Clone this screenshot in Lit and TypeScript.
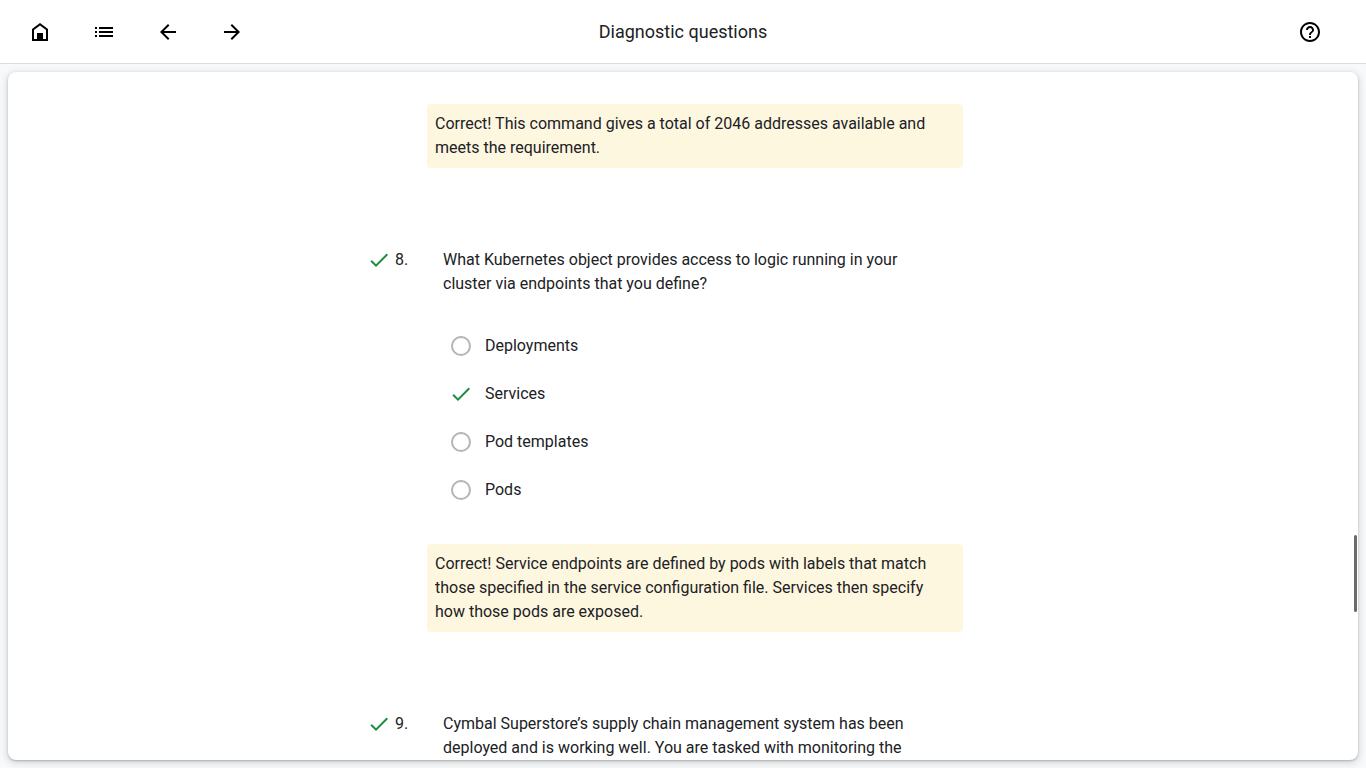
import { LitElement, html, css, svg, nothing } from "lit";
import { customElement, property } from "lit/decorators.js";

const ICONS = {
  home: svg`<path fill-rule="evenodd" d="M4 21V9l8-6 8 6v12zM6 19h3v-6h6v6h3v-9l-6-4.5L6 10z"/><path d="M9 13h6v7H9z"/>`,
  list: svg`<path d="M3 13h2v-2H3v2zm0 4h2v-2H3v2zm0-8h2V7H3v2zm4 4h14v-2H7v2zm0 4h14v-2H7v2zM7 7v2h14V7H7z"/>`,
  back: svg`<path d="M20 11H7.83l5.59-5.59L12 4l-8 8 8 8 1.41-1.41L7.83 13H20v-2z"/>`,
  forward: svg`<path d="M12 4l-1.41 1.41L16.17 11H4v2h12.17l-5.58 5.59L12 20l8-8z"/>`,
  help: svg`<path d="M11 18h2v-2h-2v2zm1-16C6.48 2 2 6.48 2 12s4.48 10 10 10 10-4.48 10-10S17.52 2 12 2zm0 18c-4.41 0-8-3.59-8-8s3.59-8 8-8 8 3.59 8 8-3.59 8-8 8zm0-14c-2.21 0-4 1.79-4 4h2c0-1.1.9-2 2-2s2 .9 2 2c0 2-3 1.75-3 5h2c0-2.25 3-2.5 3-5 0-2.21-1.79-4-4-4z"/>`,
  check: svg`<path d="M9 16.17L4.83 12l-1.42 1.41L9 19 21 7l-1.41-1.41z"/>`,
};

type IconName = keyof typeof ICONS;

const icon = (name: IconName) =>
  html`<svg class="icon" viewBox="0 0 24 24" aria-hidden="true">${ICONS[name]}</svg>`;

const iconStyles = css`
  .icon {
    display: block;
    width: 24px;
    height: 24px;
    fill: currentColor;
  }
`;

interface Question {
  number: number;
  text: string;
  options: string[];
  answer?: string;
  feedback?: string;
}

const PREVIOUS_FEEDBACK =
  "Correct! This command gives a total of 2046 addresses available and meets the requirement.";

const QUESTIONS: Question[] = [
  {
    number: 8,
    text: "What Kubernetes object provides access to logic running in your cluster via endpoints that you define?",
    options: ["Deployments", "Services", "Pod templates", "Pods"],
    answer: "Services",
    feedback:
      "Correct! Service endpoints are defined by pods with labels that match those specified in the service configuration file. Services then specify how those pods are exposed.",
  },
  {
    number: 9,
    text: "Cymbal Superstore’s supply chain management system has been deployed and is working well. You are tasked with monitoring the",
    options: [],
  },
];

@customElement("quiz-header")
class QuizHeader extends LitElement {
  static styles = [
    iconStyles,
    css`
      :host {
        display: block;
      }
      .bar {
        box-sizing: border-box;
        display: grid;
        grid-template-columns: 1fr auto 1fr;
        align-items: center;
        height: 64px;
        padding: 0 16px;
        background: #fff;
        border-bottom: 1px solid #dadce0;
      }
      .group {
        display: flex;
        gap: 16px;
      }
      .end {
        justify-content: flex-end;
        padding-right: 16px;
      }
      .button {
        display: grid;
        place-items: center;
        width: 48px;
        height: 48px;
        padding: 0;
        border: 0;
        border-radius: 50%;
        background: none;
        color: #000;
        cursor: pointer;
      }
      .title {
        margin: 0;
        font-size: 18px;
        font-weight: 400;
        line-height: 24px;
        color: #202124;
      }
    `,
  ];

  private button(name: IconName, label: string) {
    return html`<button class="button" type="button" aria-label=${label}>${icon(name)}</button>`;
  }

  render() {
    return html`
      <header class="bar">
        <nav class="group">
          ${this.button("home", "Home")} ${this.button("list", "Contents")}
          ${this.button("back", "Previous")} ${this.button("forward", "Next")}
        </nav>
        <h1 class="title">Diagnostic questions</h1>
        <div class="group end">${this.button("help", "Help")}</div>
      </header>
    `;
  }
}

@customElement("quiz-feedback")
class QuizFeedback extends LitElement {
  static styles = css`
    :host {
      display: block;
    }
    .note {
      margin: 0;
      padding: 8px;
      border-radius: 4px;
      background: #fef7e0;
    }
  `;

  render() {
    return html`<p class="note"><slot></slot></p>`;
  }
}

@customElement("quiz-question")
class QuizQuestion extends LitElement {
  static styles = [
    iconStyles,
    css`
      :host {
        display: block;
      }
      .prompt {
        display: grid;
        grid-template-columns: 28px 48px 1fr;
        padding-right: 16px;
      }
      .text {
        margin: 0;
      }
      .icon {
        color: #1e8e3e;
      }
      .options {
        margin: 26px 0 30px;
        padding: 0 0 0 82px;
        border: 0;
      }
      .option {
        display: grid;
        grid-template-columns: 24px 1fr;
        column-gap: 12px;
        align-items: center;
        height: 48px;
        cursor: pointer;
      }
      .radio {
        grid-area: 1 / 1;
        justify-self: center;
        appearance: none;
        box-sizing: border-box;
        width: 20px;
        height: 20px;
        margin: 0;
        border: 2px solid #b4b4b4;
        border-radius: 50%;
      }
      .radio:checked {
        border-color: transparent;
      }
      .option .icon {
        grid-area: 1 / 1;
      }
      .feedback {
        margin-left: 60px;
      }
    `,
  ];

  @property({ attribute: false }) question!: Question;

  render() {
    const { number, text, options, answer, feedback } = this.question;
    return html`
      <div class="prompt">
        ${icon("check")}
        <span>${number}.</span>
        <p class="text" id="prompt">${text}</p>
      </div>
      ${options.length
        ? html`<fieldset class="options" aria-labelledby="prompt">
            ${options.map(
              (option) => html`<label class="option">
                <input
                  class="radio"
                  type="radio"
                  name="answer"
                  .value=${option}
                  ?checked=${option === answer}
                />
                ${option === answer ? icon("check") : nothing}
                <span>${option}</span>
              </label>`
            )}
          </fieldset>`
        : nothing}
      ${feedback ? html`<quiz-feedback class="feedback">${feedback}</quiz-feedback>` : nothing}
    `;
  }
}

@customElement("app-root")
class AppRoot extends LitElement {
  static styles = css`
    :host {
      display: flex;
      flex-direction: column;
      height: 100vh;
      background: #f8f9fa;
      color: #202124;
      font-family: Roboto, "Liberation Sans", sans-serif;
      font-size: 16px;
      line-height: 24px;
    }
    .card {
      position: relative;
      flex: 1;
      min-height: 0;
      margin: 8px;
      overflow: hidden;
      border-radius: 8px;
      background: #fff;
      box-shadow: 0 1px 2px rgba(60, 64, 67, 0.3), 0 2px 6px 2px rgba(60, 64, 67, 0.15);
    }
    .column {
      box-sizing: border-box;
      display: flex;
      flex-direction: column;
      gap: 80px;
      max-width: 632px;
      margin: 0 auto;
      padding: 32px 36px 0 0;
    }
    .previous {
      margin-left: 60px;
    }
    .thumb {
      position: absolute;
      right: 1px;
      width: 3px;
      border-radius: 2px;
      background: #6b6b6b;
    }
  `;

  @property({ type: Number }) scrolled = 67.3;
  @property({ type: Number }) visible = 11.2;

  render() {
    return html`
      <quiz-header></quiz-header>
      <main class="card">
        <div class="column">
          <quiz-feedback class="previous">${PREVIOUS_FEEDBACK}</quiz-feedback>
          ${QUESTIONS.map((q) => html`<quiz-question .question=${q}></quiz-question>`)}
        </div>
        <div class="thumb" style="top:${this.scrolled}%;height:${this.visible}%"></div>
      </main>
    `;
  }
}
